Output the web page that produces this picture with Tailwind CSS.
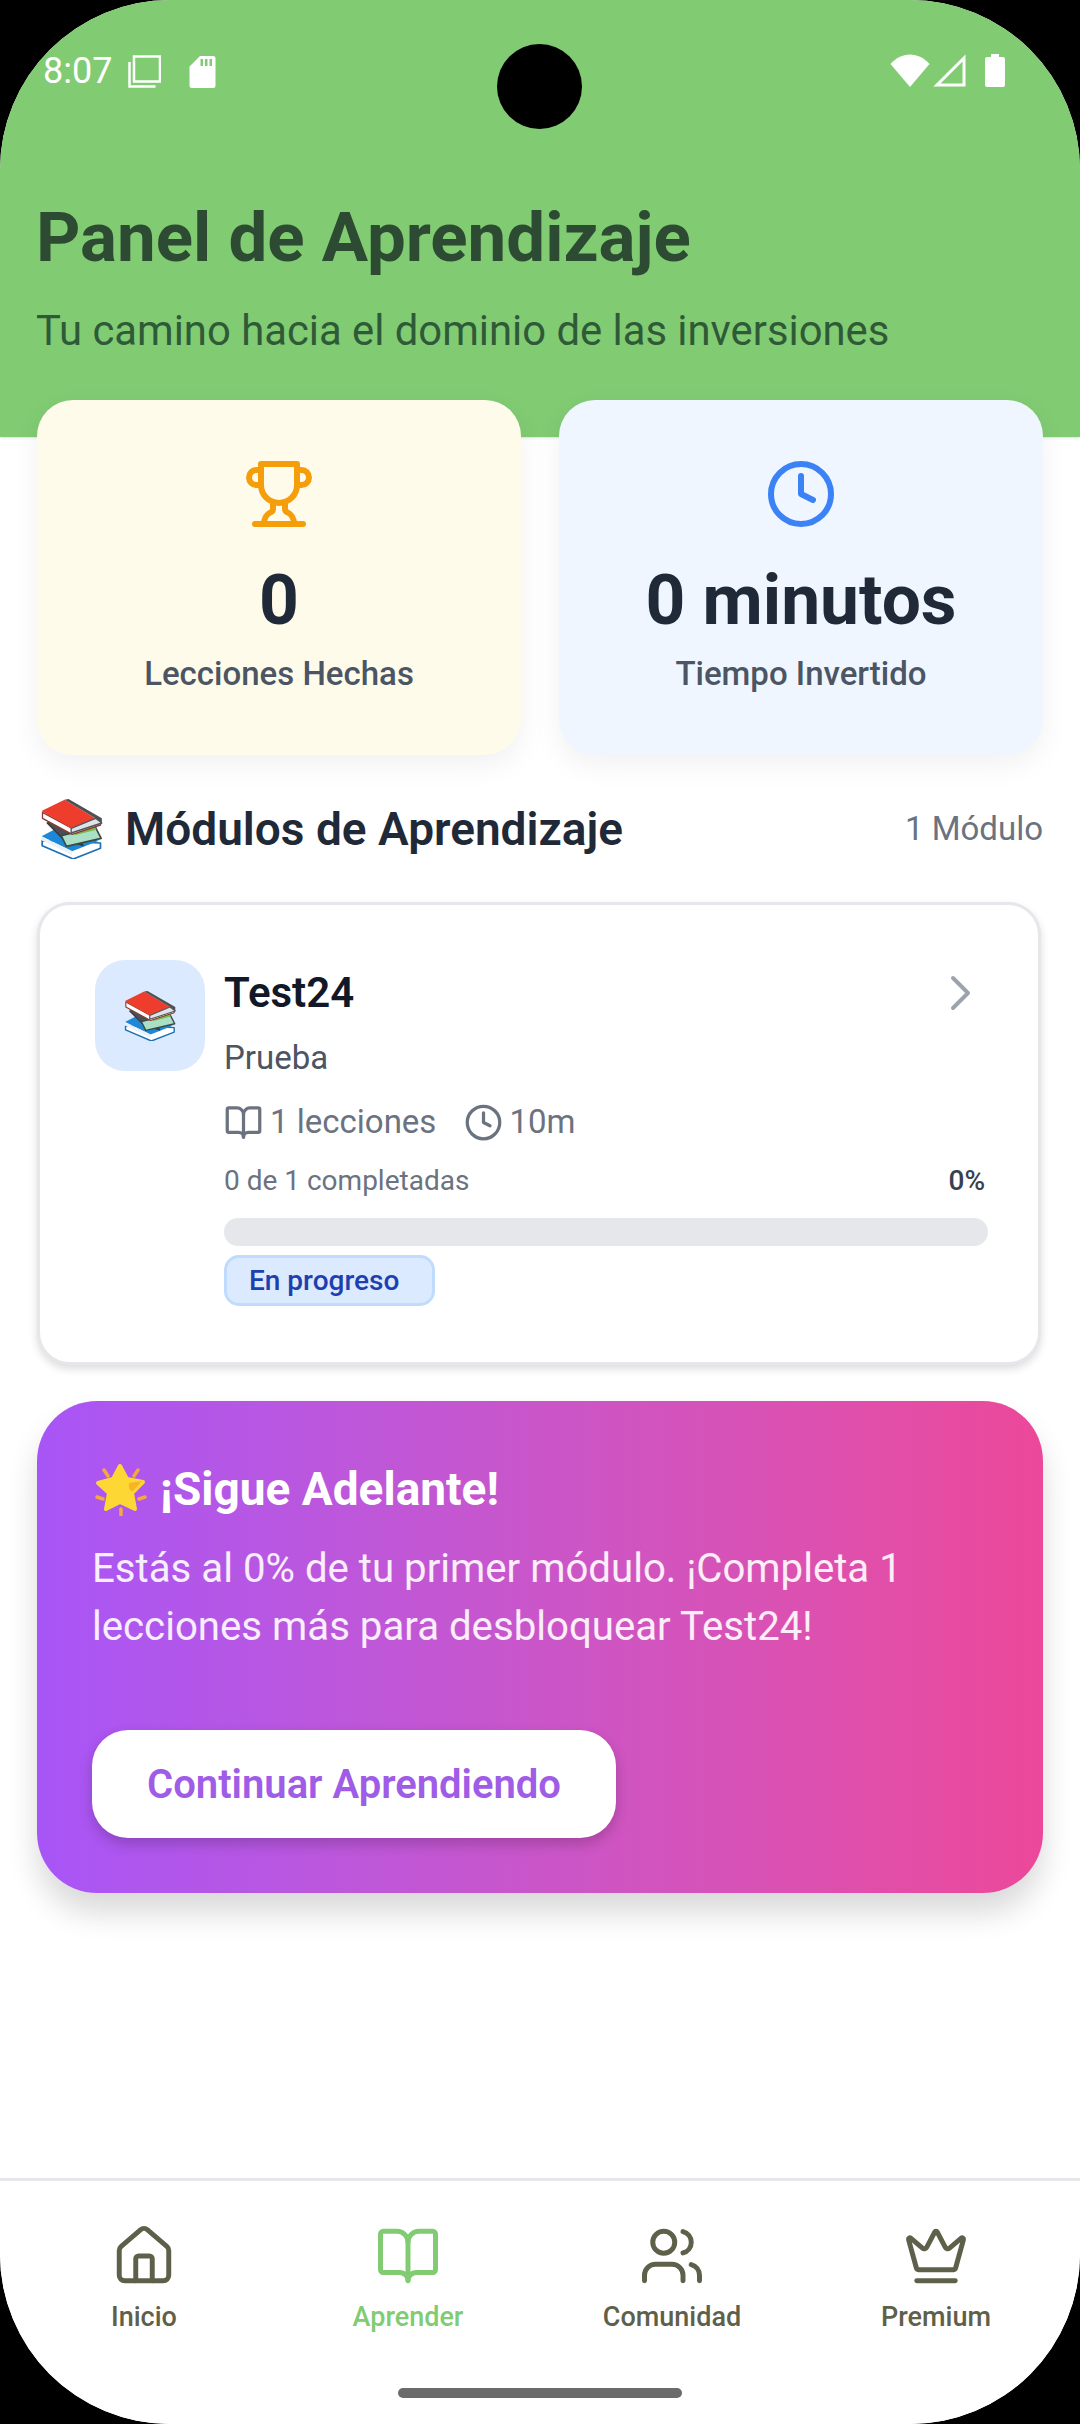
<!DOCTYPE html>
<html lang="es">
<head>
  <meta charset="UTF-8" />
  <meta name="viewport" content="width=device-width, initial-scale=1.0"/>
  <title>Panel de Aprendizaje</title>
  <script src="https://cdn.jsdelivr.net/npm/@tailwindcss/browser@4"></script>
</head>
<body class="bg-black">
  <!-- shared emoji drawing -->
  <svg class="hidden">
    <symbol id="books" viewBox="0 0 186 180">
      <path d="M5 125 L5 140 L98 180 L180 148 L180 132 Z" fill="#fff" stroke="#1b6fb5" stroke-width="5" stroke-linejoin="round"/>
      <path d="M3 112 L45 90 L175 125 L95 157 Z" fill="#1e88d8"/>
      <path d="M3 112 L3 124 L95 168 L95 157 Z" fill="#e8f2f8"/>
      <path d="M20 72 L72 60 L128 140 L70 122 Z" fill="#4b4f55" stroke="#35383c" stroke-width="4" stroke-linejoin="round"/>
      <path d="M62 110 L165 85 L182 118 L78 142 Z" fill="#a9e0c6" stroke="#3c4a44" stroke-width="5" stroke-linejoin="round"/>
      <path d="M95 90 L160 78 L168 92 L105 108 Z" fill="#7cb84a"/>
      <path d="M6 40 L6 58 L95 106 L180 78 L180 62 L95 88 Z" fill="#fff" stroke="#8c3b30" stroke-width="4" stroke-linejoin="round"/>
      <path d="M3 36 L72 2 L165 58 L92 88 Z" fill="#ee3d2c"/>
      <path d="M72 2 L84 0 L184 58 L184 72 L165 58 Z" fill="#4d4f53"/>
      <path d="M92 88 L92 102 L184 72 L165 58 Z" fill="#dfe3e6" stroke="#50545a" stroke-width="4" stroke-linejoin="round"/>
    </symbol>
  </svg>

  <div class="relative h-[2424px] w-[1080px] overflow-hidden rounded-[170px] bg-white font-['Roboto',sans-serif] flex flex-col">
    <!-- camera -->
    <div class="absolute left-[497px] top-[44px] z-20 h-[85px] w-[85px] rounded-full bg-black"></div>

    <!-- HEADER -->
    <header class="h-[437px] shrink-0 bg-[#81cb73] shadow-sm">
      <div class="flex h-[142px] items-start justify-between pl-[43px] pr-[75px] pt-[54px]">
        <div class="flex items-center text-white">
          <span class="text-[36px] leading-[34px] w-[85px]">8:07</span>
          <svg class="h-[33px] w-[33px]" viewBox="0 0 33 33" fill="none" stroke="#fff" stroke-width="2.5"><rect x="6" y="1.5" width="26" height="25"/><path d="M1.5 7v24.500h26"/></svg>
          <svg class="ml-[28px] h-[33px] w-[27px]" viewBox="0 0 27 33" fill="#fff"><path d="M11 1h13a2.500 2.500 0 0 1 2.500 2.500v27a2.500 2.500 0 0 1-2.500 2.500H3a2.500 2.500 0 0 1-2.500-2.500V11.500zM11.500 4v7h2.500V4zM16 4v7h2.500V4zM20.500 4v7H23V4z" fill-rule="evenodd"/></svg>
        </div>
        <div class="flex items-center">
          <svg class="h-[33px] w-[40px]" viewBox="0 0 40 33" fill="#fff"><path d="M20 33 0.500 10C6 4 12.500 0.500 20 0.500S34 4 39.500 10z"/></svg>
          <svg class="ml-[3px] h-[33px] w-[33px]" viewBox="0 0 33 33" fill="none" stroke="#fff" stroke-width="3"><path d="M31 4v27H4z"/></svg>
          <svg class="ml-[19px] h-[33px] w-[20px]" viewBox="0 0 20 33" fill="#fff"><path d="M6 0h8v3h4a2 2 0 0 1 2 2v26a2 2 0 0 1-2 2H2a2 2 0 0 1-2-2V5a2 2 0 0 1 2-2h4z"/></svg>
        </div>
      </div>
      <div class="px-[36px] pt-[48px]">
        <h1 class="text-[69px] leading-[96px] font-bold text-[#2d4a33]">Panel de Aprendizaje</h1>
        <p class="mt-[17px] text-[41.8px] leading-[56px] text-[#2f5a37]">Tu camino hacia el dominio de las inversiones</p>
      </div>
    </header>

    <!-- STATS -->
    <section class="relative z-10 -mt-[37px] grid grid-cols-2 gap-[38px] px-[37px]">
      <div class="flex h-[355px] flex-col items-center rounded-[36px] bg-[#fffbeb] pt-[58px] shadow-[0_10px_30px_rgba(0,0,0,0.06)]">
        <svg class="h-[72px] w-[72px]" viewBox="0 0 24 24" fill="none" stroke="#f59e0b" stroke-width="2" stroke-linecap="round" stroke-linejoin="round"><path d="M6 9H4.500a2.500 2.500 0 0 1 0-5H6"/><path d="M18 9h1.500a2.500 2.500 0 0 0 0-5H18"/><path d="M4 22h16"/><path d="M10 14.660V17c0 .55-.47.98-.97 1.210C7.850 18.750 7 20.240 7 22"/><path d="M14 14.660V17c0 .55.47.98.97 1.210C16.150 18.750 17 20.240 17 22"/><path d="M18 2H6v7a6 6 0 0 0 12 0V2Z"/></svg>
        <div class="mt-[29px] text-[69.5px] leading-[84px] font-bold text-[#1f2937]">0</div>
        <div class="mt-[9px] text-[33px] leading-[44px] font-medium text-[#4b5563]">Lecciones Hechas</div>
      </div>
      <div class="flex h-[355px] flex-col items-center rounded-[36px] bg-[#eff6ff] pt-[58px] shadow-[0_10px_30px_rgba(0,0,0,0.06)]">
        <svg class="h-[72px] w-[72px]" viewBox="0 0 24 24" fill="none" stroke="#3b82f6" stroke-width="2" stroke-linecap="round" stroke-linejoin="round"><circle cx="12" cy="12" r="10"/><polyline points="12 6 12 12 16 14"/></svg>
        <div class="mt-[29px] text-[69.5px] leading-[84px] font-bold text-[#1f2937]">0 minutos</div>
        <div class="mt-[9px] text-[33px] leading-[44px] font-medium text-[#4b5563]">Tiempo Invertido</div>
      </div>
    </section>

    <!-- MODULES -->
    <section class="mt-[41px] px-[37px]">
      <div class="flex h-[66px] items-center justify-between">
        <div class="flex items-center">
          <svg class="ml-[3px] h-[60px] w-[63px]"><use href="#books"/></svg>
          <h2 class="ml-[22px] text-[46px] leading-[60px] font-semibold text-[#1f2937]">Módulos de Aprendizaje</h2>
        </div>
        <span class="text-[33px] text-[#6b7280]">1 Módulo</span>
      </div>

      <div class="mt-[40px] flex h-[463px] w-[1004px] gap-[19px] rounded-[33px] border-[3px] border-[#e5e7eb] bg-white pl-[55px] pr-[50px] pt-[54px] shadow-[0_4px_8px_rgba(0,0,0,0.14)]">
        <div class="mt-[1px] flex h-[111px] w-[110px] shrink-0 items-center justify-center rounded-[30px] bg-[#dbeafe]">
          <svg class="h-[50px] w-[52px]"><use href="#books"/></svg>
        </div>
        <div class="flex-1 pt-[4px]">
          <div class="flex items-center justify-between">
            <h3 class="text-[42px] leading-[60px] font-semibold text-[#111827]">Test24</h3>
            <svg class="mr-[16px] h-[36px] w-[24px]" viewBox="0 0 24 36" fill="none" stroke="#9ca3af" stroke-width="4" stroke-linecap="round" stroke-linejoin="round"><path d="M5 3l15 15L5 33"/></svg>
          </div>
          <p class="mt-[11px] text-[33px] leading-[48px] text-[#4b5563]">Prueba</p>
          <div class="mt-[18px] flex h-[44px] items-center text-[33px] text-[#6b7280]">
            <svg class="h-[39px] w-[39px]" viewBox="0 0 24 24" fill="none" stroke="currentColor" stroke-width="2" stroke-linecap="round" stroke-linejoin="round"><path d="M12 7v14"/><path d="M3 18a1 1 0 0 1-1-1V4a1 1 0 0 1 1-1h5a4 4 0 0 1 4 4 4 4 0 0 1 4-4h5a1 1 0 0 1 1 1v13a1 1 0 0 1-1 1h-6a3 3 0 0 0-3 3 3 3 0 0 0-3-3z"/></svg>
            <span class="ml-[7px]">1 lecciones</span>
            <svg class="ml-[28px] h-[39px] w-[39px]" viewBox="0 0 24 24" fill="none" stroke="currentColor" stroke-width="2" stroke-linecap="round" stroke-linejoin="round"><circle cx="12" cy="12" r="10"/><polyline points="12 6 12 12 16 14"/></svg>
            <span class="ml-[6px]">10m</span>
          </div>
          <div class="mt-[19px] flex items-center justify-between pr-[3px] text-[28px] leading-[36px]">
            <span class="text-[#6b7280]">0 de 1 completadas</span>
            <span class="font-medium text-[#374151]">0%</span>
          </div>
          <div class="mt-[19px] h-[28px] rounded-full bg-[#e5e7eb]"></div>
          <span class="mt-[9px] inline-block h-[51px] rounded-[15px] border-[3px] border-[#bfdbfe] bg-[#dbeafe] pl-[22px] pr-[33px] text-[28px] leading-[45px] font-medium text-[#1e40af]">En progreso</span>
        </div>
      </div>
    </section>

    <!-- CTA -->
    <section class="mx-[37px] mt-[36px] h-[492px] rounded-[60px] bg-gradient-to-r from-[#a855f7] to-[#ec4899] pl-[55px] pr-[40px] pt-[51px] text-white shadow-[0_20px_30px_rgba(0,0,0,0.15)]">
      <h2 class="flex h-[74px] items-center text-[46px] font-bold">
        <svg class="ml-[3px] mr-[13px] h-[53px] w-[52px]" viewBox="0 0 52 53">
          <path d="M9 7l4 6M43 7l-4 6M2 34l6 2M50 34l-6 2M26 46v6" stroke="#f4a93a" stroke-width="3.500" stroke-linecap="round" fill="none"/>
          <path d="M25 3 32 16 48 19 37 30 40 46 25 39 11 46 14 30 3 20 18 16z" fill="#fdd835" stroke="#fdd835" stroke-width="4" stroke-linejoin="round"/>
          <path d="M34 20l13-2-9 10c-2 1-5-2-4-8z" fill="#f9b425"/>
        </svg>
        ¡Sigue Adelante!
      </h2>
      <p class="mt-[14px] text-[40.2px] leading-[58px] text-white/90">Estás al 0% de tu primer módulo. ¡Completa 1 lecciones más para desbloquear Test24!</p>
      <button class="mt-[74px] h-[108px] w-[524px] rounded-[36px] bg-white pt-[2px] text-[40px] font-semibold text-[#9f5ce6] shadow-[0_6px_14px_rgba(0,0,0,0.2)]">Continuar Aprendiendo</button>
    </section>

    <!-- BOTTOM NAV -->
    <nav class="relative mt-auto h-[246px] shrink-0 border-t-[3px] border-[#e5e7eb] bg-white">
      <div class="grid grid-cols-4 px-[12px] pt-[42px] text-[27px] leading-[36px] font-medium text-[#5f6049]">
        <div class="flex flex-col items-center gap-[10px]">
          <svg class="h-[66px] w-[66px]" viewBox="0 0 24 24" fill="none" stroke="currentColor" stroke-width="1.8" stroke-linecap="round" stroke-linejoin="round"><path d="M15 21v-8a1 1 0 0 0-1-1h-4a1 1 0 0 0-1 1v8"/><path d="M3 10a2 2 0 0 1 .709-1.528l7-5.999a2 2 0 0 1 2.582 0l7 5.999A2 2 0 0 1 21 10v9a2 2 0 0 1-2 2H5a2 2 0 0 1-2-2z"/></svg>
          <span>Inicio</span>
        </div>
        <div class="flex flex-col items-center gap-[10px] text-[#81cb73]">
          <svg class="h-[66px] w-[66px]" viewBox="0 0 24 24" fill="none" stroke="currentColor" stroke-width="1.8" stroke-linecap="round" stroke-linejoin="round"><path d="M12 7v14"/><path d="M3 18a1 1 0 0 1-1-1V4a1 1 0 0 1 1-1h5a4 4 0 0 1 4 4 4 4 0 0 1 4-4h5a1 1 0 0 1 1 1v13a1 1 0 0 1-1 1h-6a3 3 0 0 0-3 3 3 3 0 0 0-3-3z"/></svg>
          <span>Aprender</span>
        </div>
        <div class="flex flex-col items-center gap-[10px]">
          <svg class="h-[66px] w-[66px]" viewBox="0 0 24 24" fill="none" stroke="currentColor" stroke-width="1.8" stroke-linecap="round" stroke-linejoin="round"><path d="M16 21v-2a4 4 0 0 0-4-4H6a4 4 0 0 0-4 4v2"/><circle cx="9" cy="7" r="4"/><path d="M22 21v-2a4 4 0 0 0-3-3.870"/><path d="M16 3.130a4 4 0 0 1 0 7.750"/></svg>
          <span>Comunidad</span>
        </div>
        <div class="flex flex-col items-center gap-[10px]">
          <svg class="h-[66px] w-[66px]" viewBox="0 0 24 24" fill="none" stroke="currentColor" stroke-width="1.8" stroke-linecap="round" stroke-linejoin="round"><path d="M11.562 3.266a.5.5 0 0 1 .876 0L15.390 8.870a1 1 0 0 0 1.516.294L21.183 5.500a.5.5 0 0 1 .798.519l-2.834 10.246a1 1 0 0 1-.956.734H5.810a1 1 0 0 1-.957-.734L2.020 6.020a.5.5 0 0 1 .798-.519l4.276 3.664a1 1 0 0 0 1.516-.294z"/><path d="M5 21h14"/></svg>
          <span>Premium</span>
        </div>
      </div>
      <div class="absolute bottom-[26px] left-[398px] h-[10px] w-[284px] rounded-full bg-[#6b6b6b]"></div>
    </nav>
  </div>
</body>
</html>
